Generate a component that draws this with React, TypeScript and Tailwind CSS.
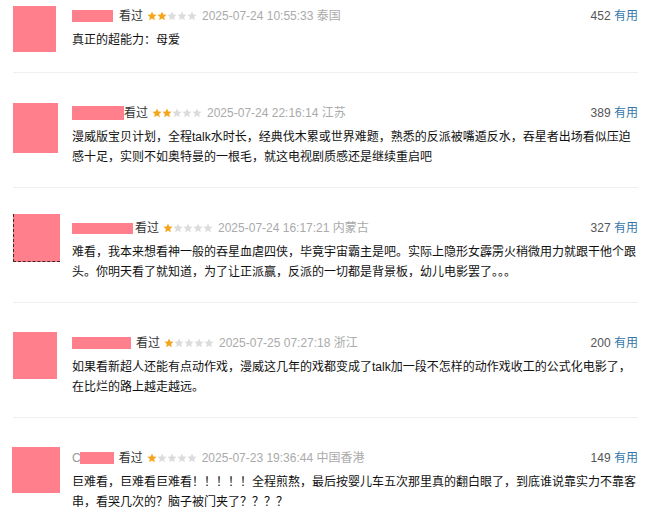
import React from "react";

type Review = {
  avatar: string;
  nameW: string;
  nameH: string;
  nameGap: string;
  prefix?: string;
  stars: number;
  time: string;
  place: string;
  votes: number;
  lines: string[];
};

const reviews: Review[] = [
  {
    avatar: "w-[43px] h-[46px]",
    nameW: "w-[41px]",
    nameH: "h-[12px]",
    nameGap: "mr-[6px]",
    stars: 2,
    time: "2025-07-24 10:55:33",
    place: "泰国",
    votes: 452,
    lines: ["真正的超能力：母爱"],
  },
  {
    avatar: "w-[45px] h-[50px]",
    nameW: "w-[52px]",
    nameH: "h-[14px]",
    nameGap: "mr-0",
    stars: 2,
    time: "2025-07-24 22:16:14",
    place: "江苏",
    votes: 389,
    lines: [
      "漫威版宝贝计划，全程talk水时长，经典伐木累或世界难题，熟悉的反派被嘴遁反水，吞星者出场看似压迫",
      "感十足，实则不如奥特曼的一根毛，就这电视剧质感还是继续重启吧",
    ],
  },
  {
    avatar: "w-[47px] h-[48px] -mt-1 border-l border-b border-dashed border-[#3b2a22]",
    nameW: "w-[61px]",
    nameH: "h-[11px]",
    nameGap: "mr-[2px]",
    stars: 1,
    time: "2025-07-24 16:17:21",
    place: "内蒙古",
    votes: 327,
    lines: [
      "难看，我本来想看神一般的吞星血虐四侠，毕竟宇宙霸主是吧。实际上隐形女霹雳火稍微用力就跟干他个跟",
      "头。你明天看了就知道，为了让正派赢，反派的一切都是背景板，幼儿电影罢了。。。",
    ],
  },
  {
    avatar: "w-[44px] h-[47px] -mt-px",
    nameW: "w-[59px]",
    nameH: "h-[12px]",
    nameGap: "mr-[5px]",
    stars: 1,
    time: "2025-07-25 07:27:18",
    place: "浙江",
    votes: 200,
    lines: [
      "如果看新超人还能有点动作戏，漫威这几年的戏都变成了talk加一段不怎样的动作戏收工的公式化电影了，",
      "在比烂的路上越走越远。",
    ],
  },
  {
    avatar: "w-[48px] h-[46px] -ml-px -mt-px",
    nameW: "w-[34px]",
    nameH: "h-[12px]",
    nameGap: "mr-[5px]",
    prefix: "C",
    stars: 1,
    time: "2025-07-23 19:36:44",
    place: "中国香港",
    votes: 149,
    lines: [
      "巨难看，巨难看巨难看！！！！！全程煎熬，最后按婴儿车五次那里真的翻白眼了，到底谁说靠实力不靠客",
      "串，看哭几次的？脑子被门夹了？？？？",
    ],
  },
];

const Star = ({ on }: { on: boolean }) => (
  <svg width="10" height="10" viewBox="0 0 24 24" className="block">
    <polygon
      points="12,1 15.2,8.2 23,9 17.1,14.2 18.8,22 12,18 5.2,22 6.9,14.2 1,9 8.8,8.2"
      fill={on ? "#f5a51c" : "#dcdcdc"}
    />
  </svg>
);

const Item = ({ r, first, last }: { r: Review; first: boolean; last: boolean }) => {
  return (
    <div
      className={`flex ${first ? "pt-[6px]" : "pt-[30px]"} pb-5 ${
        last ? "" : "border-b border-[#efefef]"
      }`}
    >
      <div className="w-[59px] shrink-0">
        <div className={`bg-[#ff7f8c] ${r.avatar}`} />
      </div>
      <div className="flex-1 min-w-0">
        <div className="flex items-center h-5 text-[12px]">
          {r.prefix && (
            <span className="text-[#999] -mr-[1px]">{r.prefix}</span>
          )}
          <span className={`inline-block bg-[#ff7f8c] ${r.nameW} ${r.nameH} ${r.nameGap}`} />
          <span className="text-[#333] mr-1">看过</span>
          <span className="flex mr-[5px]">
            {[0, 1, 2, 3, 4].map((i) => (
              <Star key={i} on={i < r.stars} />
            ))}
          </span>
          <span className="text-[#aaa]">
            {r.time} {r.place}
          </span>
          <span className="ml-auto text-[#555]">
            {r.votes} <span className="text-[#3377aa]">有用</span>
          </span>
        </div>
        <div className="mt-1 text-[12px] leading-5 text-[#111]">
          {r.lines.map((l, i) => (
            <div key={i} className="whitespace-nowrap">
              {l}
            </div>
          ))}
        </div>
      </div>
    </div>
  );
};

export default function App() {
  return (
    <div
      className="w-[660px] h-[513px] overflow-hidden bg-white pl-[13px] pr-[22px]"
      style={{ fontFamily: '"Liberation Sans", "Noto Sans CJK SC", sans-serif' }}
    >
      {reviews.map((r, i) => (
        <Item key={i} r={r} first={i === 0} last={i === reviews.length - 1} />
      ))}
    </div>
  );
}
